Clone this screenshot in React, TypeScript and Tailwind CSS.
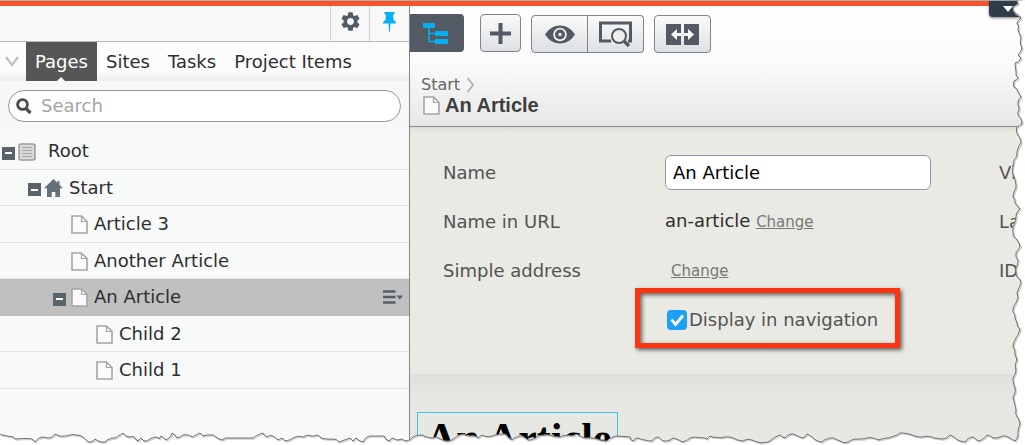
import { useState } from "react";
import type { ReactNode } from "react";
import { MdSettings } from "react-icons/md";

type NodeIcon = "root" | "home" | "page";

interface TreeNode {
  id: string;
  label: string;
  level: 0 | 1 | 2 | 3;
  icon: NodeIcon;
  expanded?: boolean;
}

const tabs = ["Pages", "Sites", "Tasks", "Project Items"];

const nodes: TreeNode[] = [
  { id: "root", label: "Root", level: 0, icon: "root", expanded: true },
  { id: "start", label: "Start", level: 1, icon: "home", expanded: true },
  { id: "article-3", label: "Article 3", level: 2, icon: "page" },
  { id: "another", label: "Another Article", level: 2, icon: "page" },
  { id: "an-article", label: "An Article", level: 2, icon: "page", expanded: true },
  { id: "child-2", label: "Child 2", level: 3, icon: "page" },
  { id: "child-1", label: "Child 1", level: 3, icon: "page" },
];

const indent = ["pl-[2px]", "pl-[28px]", "pl-[53px]", "pl-[78px]"];

// Splits long segments of a tear line into short steps that waver by a pixel
function roughen(line: string): string {
  const points = line.split(" ").map((p) => p.split(",").map(Number));
  const result: string[] = [];
  points.forEach(([x, y], i) => {
    result.push(`${x},${y}`);
    const next = points[i + 1];
    if (!next) return;
    const dx = next[0] - x;
    const dy = next[1] - y;
    const length = Math.hypot(dx, dy);
    const steps = length > 20 ? 1 : Math.round(length / 3);
    for (let s = 1; s < steps; s++) {
      const waver = ((i * 7 + s * 5) % 5) * 0.5 - 1;
      const px = x + (dx * s) / steps - (dy / length) * waver;
      const py = y + (dy * s) / steps + (dx / length) * waver;
      result.push(`${px.toFixed(1)},${py.toFixed(1)}`);
    }
  });
  return result.join(" ");
}

const bottomTear = roughen(
  "0,4 2,5 13,7 18,9 32,9 35,12 43,7 48,8 55,4 59,6 70,5 83,7 88,12 95,9 98,11 105,12 115,8 123,3 129,7 134,7 138,11 141,8 144,11 150,9 157,7 159,9 161,6 166,10 172,3 177,8 183,5 192,7 200,3 203,6 213,5 222,10 226,8 230,8 253,8 263,3 267,7 273,6 278,10 282,8 285,11 293,8 303,7 308,5 317,5 321,8 333,9 339,12 350,8 353,11 356,8 363,12 370,6 384,6 389,11 393,8 398,10 402,9 405,11 413,7 422,5 432,8 436,7 445,11 455,8 463,4 470,6 478,8 482,5 492,6 505,4 512,10 522,6 528,10 538,6 550,5 560,7 572,6 577,4 587,8 597,9 607,11 618,6 630,7 633,11 638,8 652,11 658,7 663,11 673,8 682,12 690,8 707,9 710,6 725,7 733,8 743,11 752,10 757,12 770,11 780,5 785,8 793,4 802,8 807,4 814,9 822,12 833,8 840,11 848,12 856,9 867,8 878,10 886,8 900,3 912,5 923,7 934,8 942,9 950,5 956,9 965,12 973,7 978,11 987,5 993,8 1000,7 1008,7 1015,11 1018,3"
);

const rightTear = roughen(
  "17,1 18,4 13,7 15,13 21,18 17,23 18,30 21,38 22,48 18,55 21,58 15,63 16,72 18,78 14,81 14,87 18,92 21,97 18,105 19,110 18,115 22,124 17,127 18,135 21,143 17,152 14,160 13,167 14,177 16,188 13,197 15,203 20,209 16,217 13,227 14,237 20,247 16,253 18,260 16,268 17,277 21,283 18,290 18,297 14,306 13,312 15,318 17,323 20,329 16,338 13,347 15,354 17,360 16,370 13,378 15,388 13,397 16,410 18,418 20,425 18,433"
);

function PageIcon() {
  return (
    <svg width="17" height="19" viewBox="0 0 17 19" className="shrink-0">
      <path d="M1 1h9.5L16 6.5V18H1z" fill="#fbfbfb" stroke="#a3a5a7" strokeWidth="1.6" />
      <path d="M10.5 1v5.5H16" fill="none" stroke="#a3a5a7" strokeWidth="1.2" />
    </svg>
  );
}

function RootIcon() {
  return (
    <svg width="18" height="18" viewBox="0 0 18 18" className="mr-1.5 shrink-0">
      <rect x="1" y="1" width="16" height="16" rx="2" fill="#d9d9d9" stroke="#9c9c9c" strokeWidth="1.5" />
      <path d="M4 4.5h10M4 7.5h10M4 10.5h10M4 13.5h10" stroke="#a8a8a8" />
    </svg>
  );
}

function HomeIcon() {
  return (
    <svg width="19" height="18" viewBox="0 0 19 18" className="shrink-0">
      <path d="M9.5 0 0 9.3h3V18h4.7v-5h3.6v5H16V9.3h3L15.5 6V2h-2v2z" fill="#65707a" />
    </svg>
  );
}

function NodeGlyph({ icon }: { icon: NodeIcon }) {
  if (icon === "root") return <RootIcon />;
  if (icon === "home") return <HomeIcon />;
  return (
    <span className="pl-0.5">
      <PageIcon />
    </span>
  );
}

function ToolButton({ label, className, children }: { label: string; className: string; children: ReactNode }) {
  return (
    <button
      type="button"
      aria-label={label}
      className={`flex h-[38px] items-center justify-center border border-[#7b858e] bg-gradient-to-b from-[#fafafa] to-[#dfe0e3] ${className}`}
    >
      {children}
    </button>
  );
}

function Sidebar() {
  const [activeTab, setActiveTab] = useState("Pages");
  const [selected, setSelected] = useState("an-article");

  return (
    <aside className="flex w-2/5 shrink-0 flex-col border-r border-[#858585] bg-[#f8faf9]">
      <div className="flex h-9 justify-end border-b border-[#b9babc] bg-[#f8f8f8]">
        <button type="button" aria-label="Settings" className="flex w-[39px] items-center justify-center border-l border-[#cfcfcf]">
          <MdSettings size={23} color="#535b64" className="-mt-1" />
        </button>
        <button type="button" aria-label="Pin pane" className="flex w-10 items-center justify-center border-l border-[#cfcfcf]">
          <svg width="13" height="20" viewBox="0 0 13 20" className="-mt-1">
            <path d="M1.5 0h10v2.5H10L10.5 8c1.300.5 2.500 1.600 2.500 3.500H7.500L6.800 20h-.6l-.7-8.500H0C0 9.600 1.200 8.500 2.500 8L3 2.500H1.500z" fill="#06aff2" />
          </svg>
        </button>
      </div>

      <nav className="flex h-[39px] bg-gradient-to-b from-[#fcfcfc] from-75% to-[#ececec]">
        <button type="button" aria-label="Collapse" className="flex w-[26px] items-center justify-center">
          <svg width="14" height="11" viewBox="0 0 14 11" className="mr-0.5">
            <path d="M1 1l6 8 6-8" fill="none" stroke="#c3c3c3" strokeWidth="2.4" />
          </svg>
        </button>
        {tabs.map((tab) => (
          <button
            key={tab}
            type="button"
            onClick={() => setActiveTab(tab)}
            className={`relative px-[9px] pt-px ${activeTab === tab ? "bg-[#565656] text-white" : "text-[#2e2e2e]"}`}
          >
            {tab}
            {activeTab === tab && (
              <svg width="8" height="4" viewBox="0 0 8 4" className="absolute bottom-0 left-1/2 -translate-x-1/2">
                <path d="M4 0l4 4H0z" fill="#f7f7f7" />
              </svg>
            )}
          </button>
        ))}
      </nav>

      <div className="bg-[#f7f7f7] px-2 pt-[9px] pb-[11px]">
        <label className="flex h-8 items-center rounded-full border border-[#8f99a3] bg-white pl-[7px]">
          <svg width="16" height="17" viewBox="0 0 16 17" className="shrink-0">
            <circle cx="6.500" cy="6.500" r="4.900" fill="none" stroke="#4b4b4b" strokeWidth="2.800" />
            <path d="M10 10.500l4.500 4.500" stroke="#4b4b4b" strokeWidth="3.200" />
          </svg>
          <input
            type="text"
            aria-label="Search"
            placeholder="Search"
            className="ml-[9px] min-w-0 flex-1 bg-transparent outline-none placeholder:text-[#a5a5a5]"
          />
        </label>
      </div>

      <ul>
        {nodes.map((node) => (
          <li
            key={node.id}
            className={`flex items-center border-b pr-1.5 odd:h-[37px] even:h-9 ${indent[node.level]} ${
              selected === node.id ? "border-[#c0c0c0] bg-[#c0c0c0]" : "border-[#e2e4e4]"
            }`}
          >
            <span className="mr-[3px] w-[13px] shrink-0">
              {node.expanded && (
                <button type="button" aria-label={`Collapse ${node.label}`} className="mt-1 flex h-[13px] w-[13px] items-center justify-center bg-[#59636b]">
                  <span className="h-[2px] w-[7px] bg-white" />
                </button>
              )}
            </span>
            <span className="mr-1.5 flex pt-px">
              <NodeGlyph icon={node.icon} />
            </span>
            <button type="button" onClick={() => setSelected(node.id)} className="flex-1 text-left text-[#2e2e2e]">
              {node.label}
            </button>
            {selected === node.id && (
              <button type="button" aria-label="Page menu">
                <svg width="20" height="14" viewBox="0 0 20 14">
                  <path d="M0 1.500h12.500M0 7h12.500M0 12.500h12.500" stroke="#565e67" strokeWidth="2.600" />
                  <path d="M13.500 5.500h6.500l-3.200 4z" fill="#565e67" />
                </svg>
              </button>
            )}
          </li>
        ))}
      </ul>
    </aside>
  );
}

function Toolbar() {
  return (
    <div className="flex pt-2">
      <button type="button" aria-label="Navigation pane" className="flex h-[38px] w-[54px] items-center rounded-r bg-[#535a63] pl-[13px]">
        <svg width="25" height="23" viewBox="0 0 25 23">
          <path d="M0 1h12v5H0zM12 9h13v5H12zM12 17h13v5H12z" fill="#06aff2" />
          <path d="M6 5v14.500h7M6 11.500h7" fill="none" stroke="#06aff2" strokeWidth="1.600" />
        </svg>
      </button>
      <ToolButton label="Add" className="ml-4 w-[41px] rounded">
        <svg width="21" height="21" viewBox="0 0 21 21">
          <path d="M10.500 0v21M0 10.500h21" stroke="#535a63" strokeWidth="4" />
        </svg>
      </ToolButton>
      <div className="ml-2.5 flex pt-px">
        <ToolButton label="Toggle view settings" className="w-[57px] rounded-l">
          <svg width="30" height="19" viewBox="0 0 30 19">
            <path d="M0 9.500C4 3.500 9 .5 15 .5s11 3 15 9c-4 6-9 9-15 9s-11-3-15-9z" fill="#535a63" />
            <circle cx="15" cy="9.500" r="6.800" fill="#f1f1f2" />
            <circle cx="15" cy="9.500" r="5" fill="#535a63" />
            <circle cx="15" cy="9.500" r="1.700" fill="#f1f1f2" />
          </svg>
        </ToolButton>
        <ToolButton label="Preview" className="w-14 rounded-r border-l-0">
          <svg width="33" height="26" viewBox="0 0 33 26">
            <path d="M12 20H1.500V2h30v18H29" fill="none" stroke="#535a63" strokeWidth="3" />
            <circle cx="20" cy="15" r="7" fill="#eeeeef" stroke="#535a63" strokeWidth="2" />
            <path d="M25 20l5 5" stroke="#535a63" strokeWidth="3.400" />
          </svg>
        </ToolButton>
      </div>
      <div className="ml-2.5 pt-px">
        <ToolButton label="Compare" className="w-[57px] rounded">
          <svg width="33" height="21" viewBox="0 0 33 21">
            <path d="M0 0h15v21H0zM18 0h15v21H18z" fill="#535a63" />
            <path d="M5 10.500l6-5.500v4h4v3h-4v4zM28 10.500L22 5v4h-4v3h4v4z" fill="#fff" />
          </svg>
        </ToolButton>
      </div>
    </div>
  );
}

function PropertyForm() {
  const [name, setName] = useState("An Article");
  const [visible, setVisible] = useState(true);

  return (
    <div className="grid shrink-0 grid-cols-[222px_334px_1fr] auto-rows-[49px] items-center bg-[#e9eae3] bg-gradient-to-b from-[#dcddd7] to-[#e9eae3] to-[6px] pt-[21px] pb-[30px] pl-[33px] text-[#535353]">
      <label htmlFor="name">Name</label>
      <input
        id="name"
        type="text"
        value={name}
        onChange={(e) => setName(e.target.value)}
        className="h-[35px] w-[266px] rounded-md border border-[#8f99a9] bg-white px-[7px] text-black outline-none"
      />
      <span>Vi</span>

      <span>Name in URL</span>
      <span className="text-[#2e2e2e]">
        an-article{" "}
        <a href="#url" className="text-[15px] text-[#777777] underline">
          Change
        </a>
      </span>
      <span>La</span>

      <span>Simple address</span>
      <a href="#address" className="pl-1.5 text-[15px] text-[#777777] underline">
        Change
      </a>
      <span>ID</span>

      <div className="relative col-start-2 flex items-center pl-0.5">
        <span className="relative mr-0.5 flex">
          <input
            id="display"
            type="checkbox"
            checked={visible}
            onChange={(e) => setVisible(e.target.checked)}
            className="h-5 w-5 appearance-none rounded-sm bg-[#bbbbbb] checked:bg-[#1fa0f8]"
          />
          {visible && (
            <svg width="20" height="20" viewBox="0 0 20 20" className="pointer-events-none absolute inset-0">
              <path d="M4.500 9.500l4 5 7.500-9" fill="none" stroke="#fff" strokeWidth="2.800" />
            </svg>
          )}
        </span>
        <label htmlFor="display">Display in navigation</label>
        <div className="pointer-events-none absolute -top-5 right-[99px] -bottom-4 -left-[30px] border-[5px] border-[#f93513] shadow-[2px_2px_4px_rgba(0,0,0,0.6),inset_2px_2px_4px_rgba(0,0,0,0.6)]" />
      </div>
    </div>
  );
}

function TornEdges() {
  return (
    <>
      <svg viewBox="0 0 25 445" preserveAspectRatio="none" className="pointer-events-none absolute top-0 right-0 h-full w-[25px]">
        <polygon points={`25,0 ${rightTear} 16,445 25,445`} fill="#fff" />
        <polyline points={rightTear} fill="none" stroke="#d0d0d0" strokeWidth="1.400" transform="translate(1 1)" />
        <polyline points={rightTear} fill="none" stroke="#6e6e6e" />
      </svg>
      <svg viewBox="0 0 1025 15" preserveAspectRatio="none" className="pointer-events-none absolute bottom-0 left-0 h-[15px] w-full">
        <polygon points={`0,15 ${bottomTear} 1025,3 1025,15`} fill="#fff" />
        <polyline points={bottomTear} fill="none" stroke="#d0d0d0" strokeWidth="1.400" transform="translate(1 1)" />
        <polyline points={bottomTear} fill="none" stroke="#6e6e6e" />
      </svg>
    </>
  );
}

export default function App() {
  return (
    <div className="relative flex h-screen flex-col overflow-hidden bg-white font-['DejaVu_Sans',sans-serif] text-lg leading-6">
      <div className="h-1.5 shrink-0 border-t border-[#b0aeae] bg-[#fa532b]" />
      <button
        type="button"
        aria-label="Open menu"
        className="absolute top-px right-0 flex h-4 w-9 items-center rounded-bl bg-[#2f3c49] pl-3.5 shadow-[0_1px_3px_rgba(0,0,0,0.5)]"
      >
        <svg width="10" height="6" viewBox="0 0 10 6">
          <path d="M0 0h10L5 6z" fill="#fff" />
        </svg>
      </button>

      <div className="flex min-h-0 flex-1">
        <Sidebar />
        <main className="flex min-w-0 flex-1 flex-col">
          <header className="h-[121px] shrink-0 border-b border-[#8c8c8c] bg-gradient-to-b from-white via-[#fafafa] to-[#e7e7e7]">
            <Toolbar />
            <div className="mt-[22px] flex h-5 items-center pl-[11px] text-[#666666]">
              <a href="#start" className="text-base">
                Start
              </a>
              <svg width="9" height="16" viewBox="0 0 9 16" className="ml-1.5">
                <path d="M1.500 1l5.500 7-5.500 7" fill="none" stroke="#b5b5b5" strokeWidth="2" />
              </svg>
            </div>
            <h1 className="flex h-5 items-center gap-[5px] pl-[13px] font-['Liberation_Sans',sans-serif] text-xl font-bold text-[#3e3e3e]">
              <PageIcon />
              An Article
            </h1>
          </header>

          <PropertyForm />

          <section className="min-h-0 flex-1 overflow-hidden bg-gradient-to-b from-[#e0e1dc] to-[#e7e8e4] to-40% pt-[38px] pl-[7px]">
            <h2 className="w-[201px] border border-[#3fc0ee] pl-2 font-['Liberation_Serif',serif] text-[42px] leading-[50px] font-bold text-black">
              An Article
            </h2>
          </section>
        </main>
      </div>

      <TornEdges />
    </div>
  );
}
